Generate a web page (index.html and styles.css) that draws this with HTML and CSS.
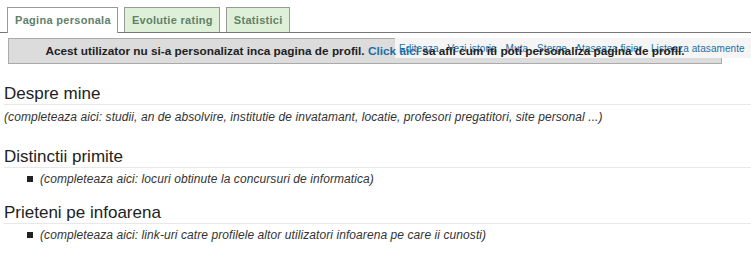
FILE: index.html
```html
<!DOCTYPE html>
<html lang="ro">
<head>
    <meta charset="UTF-8">
    <title>Pagina personala</title>
    <link rel="stylesheet" href="styles.css">
</head>
<body>
    <div class="tabs">
        <a class="tab active" href="#">Pagina personala</a>
        <a class="tab" href="#">Evolutie rating</a>
        <a class="tab" href="#">Statistici</a>
    </div>

    <div class="page">
        <!-- Page actions -->
        <div class="actions">
            <a href="#">Editeaza</a>
            <a href="#">Vezi istoria</a>
            <a href="#">Muta</a>
            <a href="#">Sterge</a>
            <a href="#">Ataseaza fisier</a>
            <a href="#">Listeaza atasamente</a>
        </div>

        <div class="notice">
            <span>Acest utilizator nu si-a personalizat inca pagina de profil. <a href="#">Click aici</a> sa afli cum iti poti personaliza pagina de profil.</span>
        </div>

        <h2>Despre mine</h2>
        <p class="hint">(completeaza aici: studii, an de absolvire, institutie de invatamant, locatie, profesori pregatitori, site personal ...)</p>

        <h2>Distinctii primite</h2>
        <ul>
            <li class="hint">(completeaza aici: locuri obtinute la concursuri de informatica)</li>
        </ul>

        <h2>Prieteni pe infoarena</h2>
        <ul>
            <li class="hint">(completeaza aici: link-uri catre profilele altor utilizatori infoarena pe care ii cunosti)</li>
        </ul>
    </div>
</body>
</html>
```

FILE: styles.css
```css
body {
    margin: 0;
    padding: 0;
    font-family: "Liberation Sans", Arial, sans-serif;
    font-size: 11px;
    color: #222;
    background: white;
}
.tabs {
    display: flex;
    align-items: flex-end;
    gap: 6px;
    padding: 8px 0 0 7px;
    border-bottom: 1px solid #777;
    height: 24px;
}
.tab {
    display: block;
    height: 24px;
    line-height: 24px;
    padding: 0 6px 0 7px;
    border: 1px solid #999;
    border-bottom: none;
    background: #dff0d8;
    color: #62806a;
    font-weight: bold;
    font-size: 11px;
    letter-spacing: 0.3px;
    text-decoration: none;
}
.tab.active {
    background: white;
    height: 25px;
    margin-bottom: -1px;
}
.page {
    position: relative;
    padding: 0 0 0 4px;
}
.actions {
    position: absolute;
    top: 0;
    right: 0;
    left: 395px;
    height: 20px;
    padding: 5px 0 0 4px;
    box-sizing: border-box;
    background: #f5f5f5;
    z-index: 1;
    font-size: 10px;
    letter-spacing: 0.08px;
    white-space: nowrap;
}
.actions a {
    color: #1a6fa5;
    text-decoration: none;
    margin-right: 6px;
}
.notice {
    margin: 5px 29px 0 4px;
    height: 24px;
    line-height: 24px;
    border: 1px solid #aaa;
    background: #dcdcdc;
    text-align: center;
    font-weight: bold;
    font-size: 11.8px;
    color: #222;
}
.notice span {
    position: relative;
    z-index: 2;
}
.notice a {
    color: #1a6fa5;
    text-decoration: none;
}
h2 {
    margin: 20px 0 0 0;
    font-size: 17px;
    font-weight: normal;
    color: #222;
    line-height: 20px;
    border-bottom: 1px solid #e8e8e8;
}
.hint {
    font-style: italic;
    font-size: 12px;
    letter-spacing: 0.08px;
    line-height: 14px;
    color: #333;
}
p.hint {
    margin: 5px 0 23px 0;
}
ul {
    margin: 4px 0 17px 0;
    padding: 0;
    list-style: none;
}
ul li {
    display: flex;
    align-items: center;
    gap: 7px;
}
ul li::before {
    content: "";
    width: 6px;
    height: 6px;
    margin-left: 23px;
    background: #222;
}
p.hint + h2,
ul + h2 {
    margin-top: 0;
}
```
